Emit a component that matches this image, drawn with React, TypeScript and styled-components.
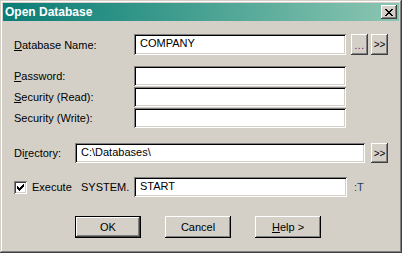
import { createGlobalStyle, styled } from "styled-components";

const GlobalStyle = createGlobalStyle`
    html, body {
        margin: 0;
        padding: 0;
        background: #d4d0c8;
    }
    body {
        font-family: "Liberation Sans", Arial, sans-serif;
        font-size: 11px;
        color: #000;
    }
`;

export default function App() {
    return (
        <>
            <GlobalStyle />
            <Window>
                <TitleBar>
                    <Title>Open Database</Title>
                    <CloseButton>
                        <svg width="8" height="7" viewBox="0 0 8 7" shapeRendering="crispEdges">
                            <path d="M0 0h2v1h-2zM6 0h2v1h-2zM1 1h2v1h-2zM5 1h2v1h-2zM2 2h4v1h-4zM3 3h2v1h-2zM2 4h4v1h-4zM1 5h2v1h-2zM5 5h2v1h-2zM0 6h2v1h-2zM6 6h2v1h-2z" fill="#000" />
                        </svg>
                    </CloseButton>
                </TitleBar>
                <Body>
                    <Row $height={21}>
                        <Label $width={120}><u>D</u>atabase Name:</Label>
                        <Field $width={212} $height={21}>COMPANY</Field>
                        <SmallButton $ml={5}><Dots>...</Dots></SmallButton>
                        <SmallButton $ml={3}>&gt;&gt;</SmallButton>
                    </Row>
                    <Stack>
                        <Row $height={20}>
                            <Label $width={120}><u>P</u>assword:</Label>
                            <Field $width={212} $height={20} />
                        </Row>
                        <Row $height={20}>
                            <Label $width={120}><u>S</u>ecurity (Read):</Label>
                            <Field $width={212} $height={20} />
                        </Row>
                        <Row $height={20}>
                            <Label $width={120}>Security (Write):</Label>
                            <Field $width={212} $height={20} />
                        </Row>
                    </Stack>
                    <Row $height={20} $mt={15}>
                        <Label $width={61}>Di<u>r</u>ectory:</Label>
                        <Field $width={290} $height={20}>C:\Databases\</Field>
                        <SmallButton $ml={6} $h={20}>&gt;&gt;</SmallButton>
                    </Row>
                    <Row $height={20} $mt={14}>
                        <CheckBox>
                            <svg width="7" height="7" viewBox="0 0 7 7" shapeRendering="crispEdges">
                                <path d="M0 2h1v3h-1zM1 3h1v3h-1zM2 4h1v3h-1zM3 3h1v3h-1zM4 2h1v3h-1zM5 1h1v3h-1zM6 0h1v3h-1z" fill="#000" />
                            </svg>
                        </CheckBox>
                        <Label $width={49} $ml={5}>Execute</Label>
                        <Label $width={53}>SYSTEM.</Label>
                        <Field $width={213} $height={20}>START</Field>
                        <Suffix>:T</Suffix>
                    </Row>
                    <ButtonRow>
                        <DialogButton $default>OK</DialogButton>
                        <DialogButton>Cancel</DialogButton>
                        <DialogButton><u>H</u>elp &gt;</DialogButton>
                    </ButtonRow>
                </Body>
            </Window>
        </>
    );
}

const Window = styled.div`
    box-sizing: border-box;
    width: 402px;
    height: 253px;
    padding: 3px;
    background: #d4d0c8;
    box-shadow: inset -1px -1px #404040, inset 1px 1px #d4d0c8,
        inset -2px -2px #808080, inset 2px 2px #ffffff;
    display: flex;
    flex-direction: column;
`;

const TitleBar = styled.div`
    height: 18px;
    display: flex;
    align-items: center;
    justify-content: space-between;
    padding: 0 2px 0 2px;
    background: linear-gradient(to right, #0a7d77, #3a9a8c 40%, #8cc6b2);
`;

const Title = styled.span`
    color: #fff;
    font-weight: bold;
    font-size: 12px;
    line-height: 18px;
`;

const CloseButton = styled.div`
    box-sizing: border-box;
    width: 16px;
    height: 14px;
    display: flex;
    align-items: center;
    justify-content: center;
    background: #d4d0c8;
    box-shadow: inset -1px -1px #404040, inset 1px 1px #ffffff,
        inset -2px -2px #808080, inset 2px 2px #d4d0c8;
`;

const Body = styled.div`
    display: flex;
    flex-direction: column;
    padding: 13px 0 0 11px;
`;

const Row = styled.div<{ $height: number; $mt?: number }>`
    display: flex;
    align-items: center;
    height: ${p => p.$height}px;
    margin-top: ${p => p.$mt ?? 0}px;
`;

const Stack = styled.div`
    display: flex;
    flex-direction: column;
    gap: 1px;
    margin-top: 11px;
`;

const Label = styled.span<{ $width: number; $ml?: number }>`
    width: ${p => p.$width}px;
    margin-left: ${p => p.$ml ?? 0}px;
    white-space: nowrap;
    flex-shrink: 0;
`;

const Field = styled.div<{ $width: number; $height: number }>`
    box-sizing: border-box;
    width: ${p => p.$width}px;
    height: ${p => p.$height}px;
    background: #fff;
    padding: 3px 6px 0 6px;
    box-shadow: inset 1px 1px #808080, inset -1px -1px #ffffff,
        inset 2px 2px #000000, inset -2px -2px #d4d0c8;
    font-size: 11px;
    white-space: nowrap;
    flex-shrink: 0;
`;

const SmallButton = styled.div<{ $ml?: number; $h?: number }>`
    box-sizing: border-box;
    width: 17px;
    height: ${p => p.$h ?? 21}px;
    margin-left: ${p => p.$ml ?? 0}px;
    display: flex;
    align-items: center;
    justify-content: center;
    font-size: 10px;
    background: #d4d0c8;
    box-shadow: inset -1px -1px #404040, inset 1px 1px #ffffff,
        inset -2px -2px #808080, inset 2px 2px #d4d0c8;
    flex-shrink: 0;
`;

const Dots = styled.span`
    color: #800080;
    font-size: 10px;
    letter-spacing: 0.5px;
    margin-top: 2px;
`;

const CheckBox = styled.div`
    box-sizing: border-box;
    width: 13px;
    height: 13px;
    display: flex;
    align-items: center;
    justify-content: center;
    background: #fff;
    box-shadow: inset 1px 1px #808080, inset -1px -1px #ffffff,
        inset 2px 2px #404040, inset -2px -2px #d4d0c8;
    flex-shrink: 0;
`;

const Suffix = styled.span`
    margin-left: 7px;
    color: #1f3f5f;
`;

const ButtonRow = styled.div`
    display: flex;
    gap: 24px;
    margin: 19px 0 0 61px;
`;

const DialogButton = styled.div<{ $default?: boolean }>`
    box-sizing: border-box;
    width: 66px;
    height: 22px;
    display: flex;
    align-items: center;
    justify-content: center;
    background: #d4d0c8;
    box-shadow: ${p => p.$default
        ? "inset -1px -1px #000, inset 1px 1px #000, inset -2px -2px #404040, inset 2px 2px #ffffff, inset -3px -3px #808080"
        : "inset -1px -1px #000000, inset 1px 1px #ffffff, inset -2px -2px #808080, inset 2px 2px #d4d0c8"};
`;
